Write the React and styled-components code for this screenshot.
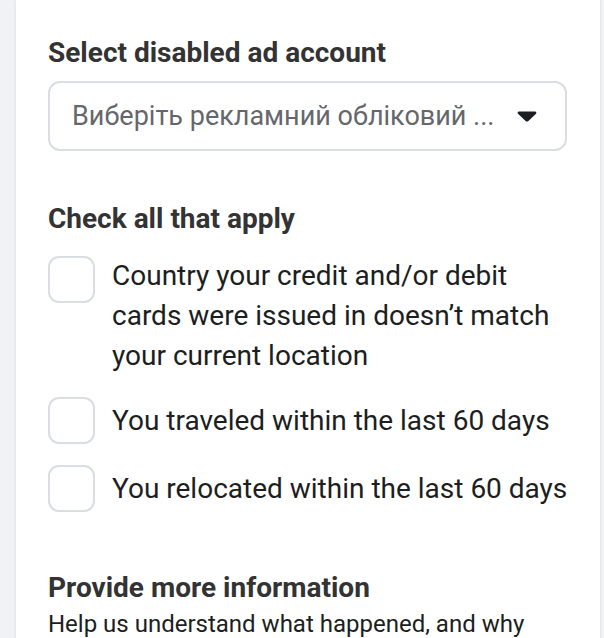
import React from 'react'
import styled, { createGlobalStyle } from 'styled-components'

const GlobalStyle = createGlobalStyle`
  html, body {
    margin: 0;
    padding: 0;
    background: #f0f2f5;
    font-family: Roboto, "Liberation Sans", Arial, sans-serif;
    -webkit-font-smoothing: antialiased;
  }
  body {
    height: 638px;
    overflow: hidden;
  }
`

const Page = styled.div`
  display: flex;
  padding-left: 16px;
  padding-right: 4px;
`

const Card = styled.div`
  flex: 1;
  background: #fff;
  min-height: 700px;
  padding: 37px 33px 0 32px;
  box-shadow: -1px 0 3px rgba(0, 0, 0, 0.06), 1px 0 2px rgba(0, 0, 0, 0.05);
`

const Heading = styled.div`
  font-size: 28px;
  line-height: 32px;
  font-weight: 700;
  color: #333;
  margin-top: ${(p) => p.$top || 0}px;
`

const SelectBox = styled.div`
  margin-top: 12px;
  height: 70px;
  box-sizing: border-box;
  border: 2px solid #dadde1;
  border-radius: 12px;
  display: flex;
  align-items: center;
  padding: 0 28px 0 22px;
  gap: 16px;
`

const Placeholder = styled.span`
  flex: 1;
  font-size: 27px;
  color: #65676b;
  white-space: nowrap;
  overflow: hidden;
`

const Caret = styled.svg`
  width: 20px;
  height: 12px;
  flex-shrink: 0;
`

const Options = styled.div`
  margin-top: 21px;
  margin-right: -10px;
  display: flex;
  flex-direction: column;
  gap: 21px;
`

const Option = styled.label`
  display: flex;
  align-items: ${(p) => (p.$multi ? 'flex-start' : 'center')};
  gap: 17px;
  padding-right: ${(p) => (p.$multi ? 10 : 0)}px;
`

const Box = styled.span`
  width: 47px;
  height: 47px;
  box-sizing: border-box;
  border: 2px solid #dadde1;
  border-radius: 11px;
  flex-shrink: 0;
`

const OptionText = styled.span`
  font-size: 28px;
  line-height: 40px;
  color: #1c1e21;
`

const HelpText = styled.div`
  font-size: 24px;
  line-height: 32px;
  color: #1c1e21;
  margin-top: 4px;
`

const options = [
  { text: 'Country your credit and/or debit cards were issued in doesn’t match your current location', multi: true },
  { text: 'You traveled within the last 60 days' },
  { text: 'You relocated within the last 60 days' },
]

function App() {
  return (
    <Page>
      <GlobalStyle />
      <Card>
        <Heading>Select disabled ad account</Heading>
        <SelectBox>
          <Placeholder>Виберіть рекламний обліковий ...</Placeholder>
          <Caret viewBox="0 0 20 12">
            <path d="M2 1.5h16c1.2 0 1.8 1.3 1 2.2l-7.6 7.3c-.8.8-2 .8-2.8 0L1 3.7C.2 2.8.8 1.5 2 1.5z" fill="#1c1e21" />
          </Caret>
        </SelectBox>

        <Heading $top={52}>Check all that apply</Heading>
        <Options>
          {options.map((o) => (
            <Option key={o.text} $multi={o.multi}>
              <Box />
              <OptionText>{o.text}</OptionText>
            </Option>
          ))}
        </Options>

        <Heading $top={60}>Provide more information</Heading>
        <HelpText>Help us understand what happened, and why</HelpText>
      </Card>
    </Page>
  )
}

export default App
